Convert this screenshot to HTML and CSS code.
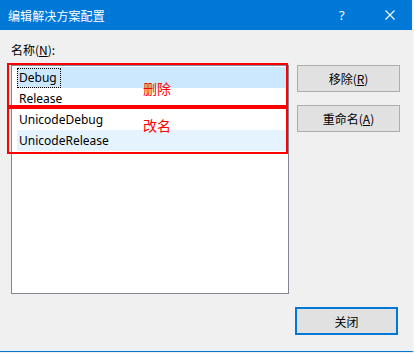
FILE: index.html
```html
<!DOCTYPE html>
<html lang="zh-CN">
<head>
<meta charset="utf-8">
<title>编辑解决方案配置</title>
<link rel="stylesheet" href="styles.css">
</head>
<body>
<div class="window">
  <div class="titlebar">
    <span class="title">编辑解决方案配置</span>
    <span class="help">?</span>
    <span class="close-x">
      <svg width="10" height="10" viewBox="0 0 10 10"><path d="M0.5 0.5 L9.5 9.5 M9.5 0.5 L0.5 9.5" stroke="#fff" stroke-width="1.1" fill="none"/></svg>
    </span>
  </div>
  <div class="content">
    <div class="label">名称(<u>N</u>):</div>
    <div class="main">
      <div class="listwrap">
        <div class="list">
          <div class="item selected"><span class="focus">Debug</span></div>
          <div class="item"><span class="txt">Release</span></div>
          <div class="item"><span class="txt">UnicodeDebug</span></div>
          <div class="item hover"><span class="txt">UnicodeRelease</span></div>
        </div>
        <div class="mark mark1"></div>
        <div class="mark mark2"></div>
        <div class="note note1">删除</div>
        <div class="note note2">改名</div>
      </div>
      <div class="buttons">
        <div class="btn">移除(<u>R</u>)</div>
        <div class="btn">重命名(<u>A</u>)</div>
      </div>
    </div>
    <div class="footer">
      <div class="btn default">关闭</div>
    </div>
  </div>
</div>
</body>
</html>
```

FILE: styles.css
```css
html, body {
  margin: 0;
  padding: 0;
}
body {
  width: 414px;
  height: 353px;
  background: #f0f0f0;
  font-family: "Noto Sans", "Noto Sans CJK SC", sans-serif;
  font-size: 12px;
  color: #000;
  overflow: hidden;
}
.window {
  height: 351px;
  border-bottom: 1px solid #0078d7;
  box-sizing: border-box;
  height: 352px;
  border-right: 2px solid #f4f4f4;
}
.titlebar {
  height: 30px;
  background: #0078d7;
  color: #fff;
  display: flex;
  align-items: center;
  font-family: "Noto Sans CJK SC", sans-serif;
}
.title {
  padding-left: 8px;
  flex: 1;
  font-size: 12px;
  letter-spacing: 0.1px;
}
.help {
  font-family: "Noto Sans", sans-serif;
  font-size: 13px;
  width: 10px;
  margin-right: 36px;
}
.close-x {
  display: flex;
  width: 10px;
  height: 10px;
  margin-right: 17px;
}
.content {
  padding: 11px 0 0 11px;
}
.label {
  height: 17px;
  line-height: 17px;
  font-family: "Noto Sans CJK SC", sans-serif;
}
.label u, .btn u {
  text-underline-offset: 1px;
}
.main {
  display: flex;
  gap: 8px;
  margin-top: 7px;
}
.listwrap {
  position: relative;
  width: 278px;
  height: 229px;
}
.list {
  box-sizing: border-box;
  width: 278px;
  height: 229px;
  background: #fff;
  border: 1px solid #828790;
  padding: 1px 2px 0 5px;
}
.item {
  height: 21px;
  line-height: 21px;
  display: flex;
  align-items: center;
}
.item .txt {
  padding-left: 2px;
}
.item.selected {
  background: #cce8ff;
}
.item.hover {
  background: #e5f3ff;
}
.focus {
  box-sizing: border-box;
  height: 20px;
  line-height: 18px;
  border: 1px dotted #000;
  padding: 0 3px 0 1px;
}
.mark {
  position: absolute;
  left: -4px;
  width: 281px;
  box-sizing: border-box;
  border: 2px solid #ff0000;
}
.mark1 {
  top: -2px;
  height: 44px;
}
.mark2 {
  top: 42px;
  height: 47px;
}
.note {
  position: absolute;
  left: 132px;
  color: #ff0000;
  font-family: "Noto Sans CJK SC", sans-serif;
  font-size: 14px;
  line-height: 16px;
}
.note1 { top: 15px; }
.note2 { top: 52px; }
.buttons {
  display: flex;
  flex-direction: column;
  gap: 13px;
}
.btn {
  box-sizing: border-box;
  width: 103px;
  height: 27px;
  background: #e1e1e1;
  border: 1px solid #adadad;
  display: flex;
  align-items: center;
  justify-content: center;
  font-family: "Noto Sans CJK SC", sans-serif;
}
.footer {
  display: flex;
  justify-content: flex-end;
  padding-right: 14px;
  margin-top: 13px;
}
.btn.default {
  height: 28px;
  border: 2px solid #0078d7;
}
```
